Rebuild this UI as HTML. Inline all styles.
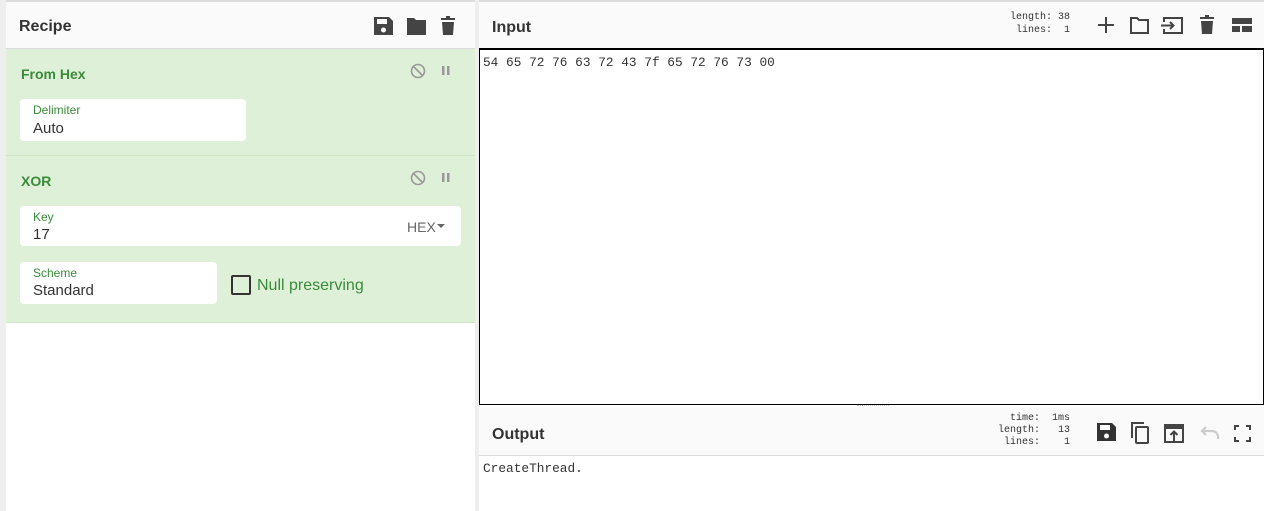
<!DOCTYPE html>
<html><head><style>
*{box-sizing:border-box;margin:0;padding:0}
body{width:1264px;height:511px;overflow:hidden;background:#fff;font-family:"Liberation Sans",sans-serif;position:relative}
.a{position:absolute}
.hdr{background:#fafafa;border-bottom:1px solid #ddd}
.title{font-weight:bold;font-size:16px;color:#333}
.mono{font-family:"Liberation Mono",monospace}
.op{background:#dff0d8;border-bottom:1px solid #cfe6c6}
.opt{color:#3a8b3a;font-weight:bold;font-size:14px}
.fld{background:#fff;border-radius:4px}
.lbl{color:#3a8b3a;font-size:12px}
.val{color:#333;font-size:15px}
</style></head><body>
<div class="a" style="left:0;top:0;width:1264px;height:2px;background:#ddd"></div>
<div class="a" style="left:0;top:0;width:6px;height:511px;background:#eee"></div>
<div class="a" style="left:475px;top:0;width:4px;height:511px;background:#eee"></div>

<!-- Recipe -->
<div class="a hdr" style="left:6px;top:2px;width:469px;height:47px"></div>
<div class="a title" style="left:19px;top:18px">Recipe</div>
<svg class="a" style="left:373px;top:15px" width="90" height="22" viewBox="0 0 90 22">
<path d="M1 2h15l4 4v14H1z" fill="#444"/><rect x="4" y="4" width="10" height="5" fill="#fafafa"/><circle cx="10.5" cy="15" r="2.5" fill="#fafafa"/>
<path d="M34 3h7l2 2h10v15H34z" fill="#444"/>
<rect x="68" y="3" width="14" height="2" fill="#444"/><rect x="73" y="1" width="4" height="3" fill="#444"/><path d="M69 7h12l-1 13h-10z" fill="#444"/>
</svg>

<div class="a op" style="left:6px;top:49px;width:469px;height:107px"></div>
<div class="a opt" style="left:21px;top:66px">From Hex</div>
<svg class="a" style="left:410px;top:63px" width="46" height="16"><circle cx="8" cy="8" r="6.5" fill="none" stroke="#999" stroke-width="1.6"/><path d="M3.5 3.5l9 9" stroke="#999" stroke-width="1.6"/><rect x="32" y="3" width="2.5" height="9" fill="#999"/><rect x="37" y="3" width="2.5" height="9" fill="#999"/></svg>
<div class="a fld" style="left:20px;top:99px;width:226px;height:42px"></div>
<div class="a lbl" style="left:33px;top:103px">Delimiter</div>
<div class="a val" style="left:33px;top:120px">Auto</div>

<div class="a op" style="left:6px;top:156px;width:469px;height:167px"></div>
<div class="a opt" style="left:21px;top:173px">XOR</div>
<svg class="a" style="left:410px;top:170px" width="46" height="16"><circle cx="8" cy="8" r="6.5" fill="none" stroke="#999" stroke-width="1.6"/><path d="M3.5 3.5l9 9" stroke="#999" stroke-width="1.6"/><rect x="32" y="3" width="2.5" height="9" fill="#999"/><rect x="37" y="3" width="2.5" height="9" fill="#999"/></svg>
<div class="a fld" style="left:20px;top:206px;width:441px;height:40px"></div>
<div class="a lbl" style="left:33px;top:210px">Key</div>
<div class="a val" style="left:33px;top:226px">17</div>
<div class="a" style="left:407px;top:219px;font-size:14px;color:#666">HEX</div>
<svg class="a" style="left:437px;top:224px" width="9" height="5"><path d="M0 0h8l-4 4z" fill="#666"/></svg>
<div class="a fld" style="left:20px;top:262px;width:197px;height:42px"></div>
<div class="a lbl" style="left:33px;top:266px">Scheme</div>
<div class="a val" style="left:33px;top:282px">Standard</div>
<div class="a" style="left:231px;top:275px;width:20px;height:20px;border:2px solid #333;border-radius:2px"></div>
<div class="a" style="left:257px;top:277px;font-size:16px;color:#3a8b3a">Null preserving</div>

<!-- Input -->
<div class="a hdr" style="left:479px;top:2px;width:785px;height:47px;border-bottom:none"></div>
<div class="a title" style="left:492px;top:19px">Input</div>
<div class="a mono" style="left:1000px;top:11px;font-size:10px;color:#333;line-height:13px;text-align:right;width:70px;white-space:pre">length: 38
lines:  1</div>
<svg class="a" style="left:1096px;top:14px" width="160" height="22" viewBox="0 0 160 22">
<path d="M10 3v16M2 11h16" stroke="#444" stroke-width="2"/>
<path d="M35 4h6l2 2h9v13H35z" fill="none" stroke="#444" stroke-width="2"/>
<path d="M68 8V4h18v15H68v-4" fill="none" stroke="#444" stroke-width="2"/><path d="M65 11.5h12M74 8l3.5 3.5L74 15" fill="none" stroke="#444" stroke-width="2"/>
<rect x="104" y="3" width="14" height="2" fill="#444"/><rect x="109" y="1" width="4" height="3" fill="#444"/><path d="M105 7h12l-1 13h-10z" fill="#444"/>
<rect x="136" y="4" width="20" height="6" fill="#444"/><rect x="136" y="12" width="8" height="6" fill="#444"/><rect x="146" y="12" width="10" height="6" fill="#444"/>
</svg>
<div class="a" style="left:479px;top:48px;width:785px;height:357px;border:1px solid #000;border-top-width:2px"></div>
<div class="a mono" style="left:483px;top:55px;font-size:12.8px;color:#333">54 65 72 76 63 72 43 7f 65 72 76 73 00</div>
<div class="a" style="left:857px;top:405px;width:32px;border-top:1px dotted #bbb"></div>

<!-- Output -->
<div class="a hdr" style="left:479px;top:407px;width:785px;height:49px"></div>
<div class="a title" style="left:492px;top:426px">Output</div>
<div class="a mono" style="left:990px;top:413px;font-size:10px;color:#333;line-height:12px;text-align:right;width:80px;white-space:pre">time:  1ms
length:   13
lines:    1</div>
<svg class="a" style="left:1096px;top:421px" width="160" height="24" viewBox="0 0 160 24">
<path d="M1 2h15l4 4v14H1z" fill="#333"/><rect x="4" y="4" width="10" height="5" fill="#fafafa"/><circle cx="10.5" cy="15" r="2.5" fill="#fafafa"/>
<path d="M36 17V2h12" fill="none" stroke="#444" stroke-width="2"/><rect x="40" y="6" width="12" height="16" rx="1" fill="none" stroke="#444" stroke-width="2"/>
<rect x="69" y="4" width="18" height="17" fill="none" stroke="#444" stroke-width="2"/><rect x="69" y="4" width="18" height="4" fill="#444"/><path d="M78 20v-9M74.5 14l3.5-3.5 3.5 3.5" fill="none" stroke="#444" stroke-width="2"/>
<path d="M106 10h10a6 6 0 0 1 6 6v2M110 6l-4 4 4 4" fill="none" stroke="#ccc" stroke-width="2.2"/>
<path d="M139 9V5h4M150 5h4v4M154 16v4h-4M143 20h-4v-4" fill="none" stroke="#444" stroke-width="2"/>
</svg>
<div class="a mono" style="left:483px;top:461px;font-size:12.8px;color:#333">CreateThread.</div>
</body></html>
